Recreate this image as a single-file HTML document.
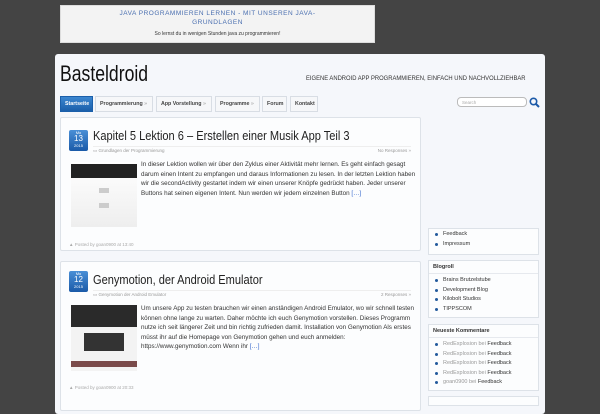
<!DOCTYPE html>
<html><head><meta charset="utf-8"><style>
*{margin:0;padding:0;box-sizing:border-box}
body{width:600px;height:400px;overflow:hidden;background:#444;font-family:"Liberation Sans",sans-serif;position:relative}
.a{position:absolute}
.ad{left:60px;top:5px;width:315px;height:38px;background:#f3f3f3;border:1px solid #ddd;text-align:center}
.wrap{left:55px;top:54px;width:490px;height:360px;background:#f5f7fb;border-radius:3px}
.tab{position:absolute;top:96px;height:16px;background:#f6f7f9;border:1px solid #d8dde4;font-size:5.3px;font-weight:bold;color:#444;line-height:14px;padding-left:4px;white-space:nowrap;overflow:hidden}
.post{position:absolute;left:60px;width:361px;background:#fcfdfe;border:1px solid #dde2e8;border-radius:2px}
.date{position:absolute;left:8px;width:19px;height:21px;background:linear-gradient(#4a8fd6,#1a5aa8);border-radius:2px;color:#fff;text-align:center;font-size:4px;line-height:5px}
.date b{display:block;font-size:8px;line-height:8px;font-weight:normal}
.ttl{position:absolute;left:32px;font-size:13px;color:#222;transform:scaleX(.85);transform-origin:0 0;white-space:nowrap}
.meta{position:absolute;left:32px;width:318px;font-size:4.5px;color:#999;border-top:1px solid #eee;padding-top:1px}
.txt{position:absolute;left:80px;width:276px;font-size:6.3px;line-height:9.6px;color:#333}
.txt a{color:#36c}
.foot{position:absolute;left:8px;font-size:4.5px;color:#aaa}
.wid{position:absolute;left:428px;width:111px;background:#fcfdfe;border:1px solid #dde2e8;font-size:5.5px;color:#333}
.wid h4{font-size:5.5px;padding:3px 4px;border-bottom:1px solid #e6e9ee}
.wid li{list-style:none;padding-left:14px;position:relative;height:9.5px;line-height:9.5px}
.wid li:before{content:"";position:absolute;left:6px;top:3px;width:3px;height:3px;border-radius:50%;background:#235a9c}
.g{color:#999;font-weight:normal}
</style></head><body>
<div class="a ad"><div style="font-size:6.5px;color:#4a6fb0;letter-spacing:.5px;line-height:9px;margin-top:3px">JAVA PROGRAMMIEREN LERNEN - MIT UNSEREN JAVA-<br>GRUNDLAGEN</div><div style="font-size:5px;color:#333;margin-top:4px">So lernst du in wenigen Stunden java zu programmieren!</div></div>
<div class="a wrap"></div>
<div class="a" style="left:60px;top:61px;font-size:22px;color:#111;transform:scaleX(.8);transform-origin:0 0">Basteldroid</div>
<div class="a" style="left:306px;top:75px;font-size:6.3px;color:#333;transform:scaleX(.93);transform-origin:0 0;white-space:nowrap">EIGENE ANDROID APP PROGRAMMIEREN, EINFACH UND NACHVOLLZIEHBAR</div>
<div class="tab" style="left:60px;width:33px;background:linear-gradient(#3b86d0,#1b5faa);color:#fff;border-color:#1b5faa;padding-left:4px">Startseite</div>
<div class="tab" style="left:95px;width:58px">Programmierung <span class="g">»</span></div>
<div class="tab" style="left:156px;width:56px">App Vorstellung <span class="g">»</span></div>
<div class="tab" style="left:215px;width:45px">Programme <span class="g">»</span></div>
<div class="tab" style="left:262px;width:25px">Forum</div>
<div class="tab" style="left:290px;width:28px">Kontakt</div>
<div class="a" style="left:457px;top:97px;width:70px;height:10px;border:1px solid #bbb;border-radius:4px;background:#fff;font-size:4.5px;color:#aaa;padding:2px 4px">Search</div>
<svg class="a" style="left:529px;top:97px" width="11" height="11" viewBox="0 0 11 11"><circle cx="4.5" cy="4.5" r="3.2" fill="none" stroke="#1c5aa8" stroke-width="1.6"/><path d="M7 7l3 3" stroke="#1c5aa8" stroke-width="2"/></svg>

<div class="post" style="top:117px;height:134px">
<div class="date" style="top:12px">Mo<b>13</b>2015</div>
<div class="ttl" style="top:10px">Kapitel 5 Lektion 6 – Erstellen einer Musik App Teil 3</div>
<div class="meta" style="top:28px">▭ Grundlagen der Programmierung<span style="float:right">No Responses »</span></div>
<div class="a" style="left:10px;top:44px;width:66px;height:65px;background:linear-gradient(#fff,#eee)"><div style="height:14px;background:#222;margin-top:2px"></div><div style="width:10px;height:5px;background:#ccc;margin:10px auto"></div><div style="width:10px;height:5px;background:#ccc;margin:10px auto"></div></div>
<div class="txt" style="top:42px">In dieser Lektion wollen wir über den Zyklus einer Aktivität mehr lernen. Es geht einfach gesagt darum einen Intent zu empfangen und daraus Informationen zu lesen. In der letzten Lektion haben wir die secondActivity gestartet indem wir einen unserer Knöpfe gedrückt haben. Jeder unserer Buttons hat seinen eigenen Intent. Nun werden wir jedem einzelnen Button <a>[…]</a></div>
<div class="foot" style="top:124px">▲ Posted by goan0900 at 13:40</div>
</div>

<div class="post" style="top:261px;height:150px">
<div class="date" style="top:9px">Mo<b>12</b>2015</div>
<div class="ttl" style="top:10px">Genymotion, der Android Emulator</div>
<div class="meta" style="top:28px">▭ Genymotion der Android Emulator<span style="float:right">2 Responses »</span></div>
<div class="a" style="left:10px;top:43px;width:66px;height:66px;background:#f3f3f3"><div style="height:22px;background:#2a2a2a"></div><div style="width:40px;height:18px;background:#333;margin:6px auto"></div><div style="height:6px;background:#7a4a4a;margin-top:10px"></div></div>
<div class="txt" style="top:42px">Um unsere App zu testen brauchen wir einen anständigen Android Emulator, wo wir schnell testen können ohne lange zu warten. Daher möchte ich euch Genymotion vorstellen. Dieses Programm nutze ich seit längerer Zeit und bin richtig zufrieden damit. Installation von Genymotion Als erstes müsst ihr auf die Homepage von Genymotion gehen und euch anmelden: https://www.genymotion.com Wenn ihr <a>[…]</a></div>
<div class="foot" style="top:123px">▲ Posted by goan0900 at 20:33</div>
</div>

<div class="wid" style="top:228px;height:27px;padding-top:1px"><ul><li>Feedback</li><li>Impressum</li></ul></div>
<div class="wid" style="top:260px;height:58px"><h4>Blogroll</h4><ul style="padding-top:2px"><li>Brains Brutzelstube</li><li>Development Blog</li><li>Kilobolt Studios</li><li>TIPPSCOM</li></ul></div>
<div class="wid" style="top:324px;height:67px"><h4>Neueste Kommentare</h4><ul style="padding-top:2px"><li><span class="g">RedExplosion bei</span> Feedback</li><li><span class="g">RedExplosion bei</span> Feedback</li><li><span class="g">RedExplosion bei</span> Feedback</li><li><span class="g">RedExplosion bei</span> Feedback</li><li><span class="g">goan0900 bei</span> Feedback</li></ul></div>
<div class="wid" style="top:396px;height:10px"></div>
</body></html>
